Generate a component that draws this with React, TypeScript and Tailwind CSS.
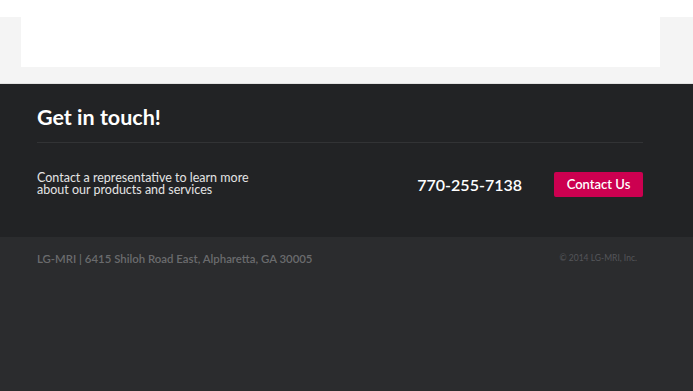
export default function App() {
  return (
    <div className="w-[693px] h-[391px] overflow-hidden flex flex-col bg-[#2b2c2e]" style={{ fontFamily: "Lato, 'Open Sans', sans-serif" }}>
      <div className="h-[17px] bg-white shrink-0" />
      <div className="h-[67px] bg-[#f4f4f4] shrink-0 px-[21px] pr-[33px] border-b border-[#e2e2e2]">
        <div className="h-[50px] bg-white" />
      </div>
      <div className="h-[153px] bg-[#222325] shrink-0 px-[37px] pr-[50px] pt-[20px]">
        <h2 className="text-[21.5px] font-bold text-white leading-[26px]">Get in touch!</h2>
        <div className="mt-[12px] h-px bg-[#323335]" />
        <div className="mt-[27px] flex items-start">
          <p className="mt-[2px] text-[12.5px] leading-[12px] text-[#e4e4e4] w-[230px]">
            Contact a representative to learn more about our products and services
          </p>
          <div className="ml-auto mt-[5px] text-[16px] leading-[19px] font-semibold text-white mr-[32px]">770-255-7138</div>
          <button className="mt-[2px] w-[89px] h-[25px] bg-[#cc0050] text-white text-[13px] font-semibold rounded-[2px]">Contact Us</button>
        </div>
      </div>
      <div className="flex-1 bg-[#2b2c2e] px-[37px] pr-[56px] pt-[15px] flex items-start">
        <div className="text-[11.4px] font-semibold text-[#6a6b6d] leading-[14px]">LG-MRI | 6415 Shiloh Road East, Alpharetta, GA 30005</div>
        <div className="ml-auto text-[8.5px] text-[#55565a] leading-[12px]">© 2014 LG-MRI, Inc.</div>
      </div>
    </div>
  );
}
